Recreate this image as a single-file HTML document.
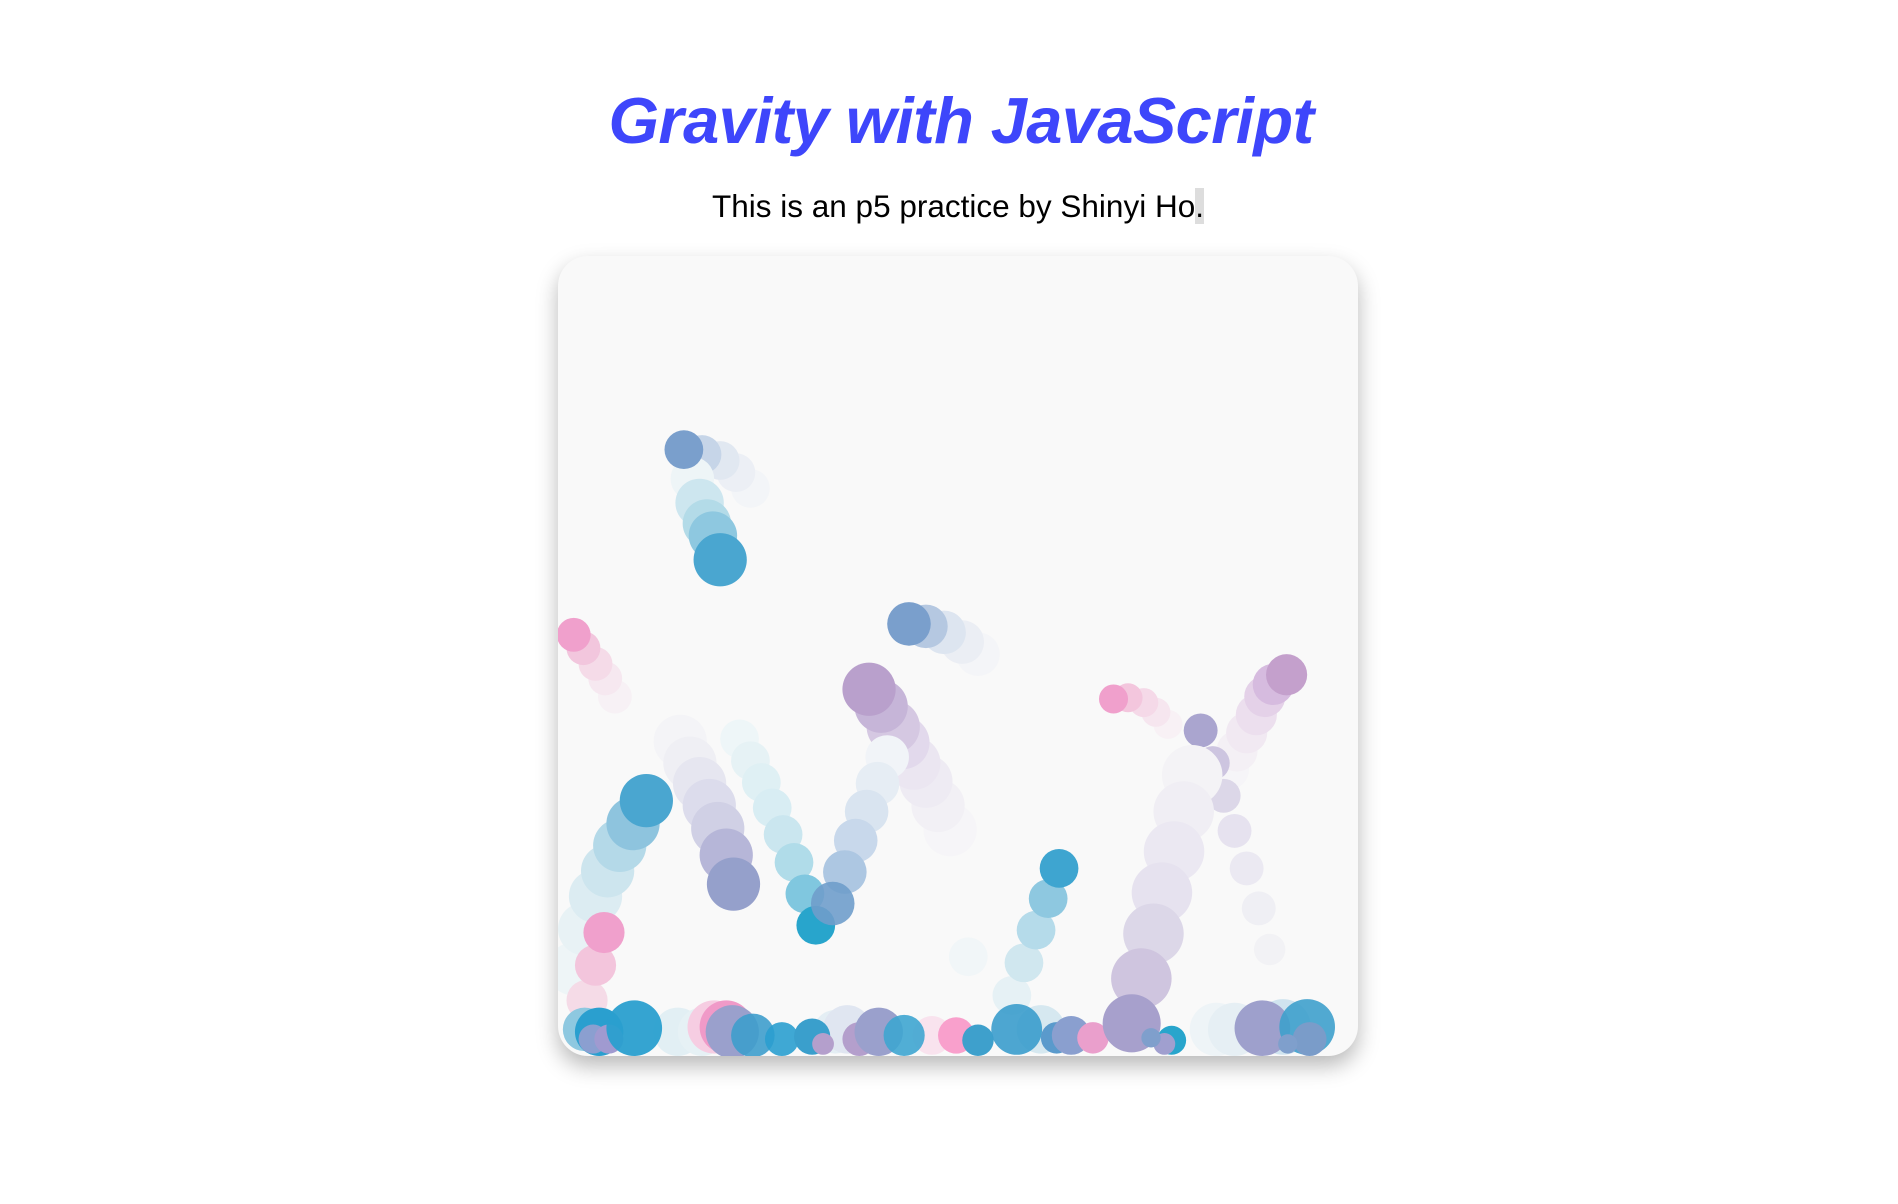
<!DOCTYPE html>
<html><head><meta charset="utf-8"><style>
html,body{margin:0;padding:0;background:#fff;width:1898px;height:1204px;overflow:hidden}
h1{position:absolute;left:0;width:1922px;top:83px;margin:0;text-align:center;font:italic bold 65px "Liberation Sans",sans-serif;color:#3e46fb;letter-spacing:-0.6px}
p{position:absolute;left:0;width:1916px;top:188px;margin:0;text-align:center;font:31.5px "Liberation Sans",sans-serif;color:#000}
p span{background:#ddd}
#card{position:absolute;left:558px;top:256px;width:800px;height:800px;border-radius:30px;overflow:hidden;background:#f9f9f9;box-shadow:0 10px 22px rgba(0,0,0,.28)}
</style></head><body>
<h1>Gravity with JavaScript</h1>
<p>This is an p5 practice by Shinyi Ho<span>.</span></p>
<div id="card">
<svg width="800" height="800" viewBox="461 211 661 661">
<g>
<circle cx="620" cy="403" r="16" fill="#f3f5f8"/><circle cx="608" cy="390" r="16" fill="#eceff5"/><circle cx="595" cy="380" r="16" fill="#e1e8f1"/><circle cx="580" cy="375" r="16" fill="#c6d5e8"/>
<circle cx="572" cy="395" r="18" fill="#eef5f7"/><circle cx="578" cy="415" r="20" fill="#cde6ef"/><circle cx="584" cy="432" r="20" fill="#b3dbe8"/><circle cx="589" cy="442" r="20" fill="#8ec8e0"/>
<circle cx="565" cy="371" r="16" fill="#7a9fcc"/>
<circle cx="595" cy="462" r="22" fill="#4aa6d0"/>
<circle cx="808" cy="540" r="18" fill="#f4f5f8"/><circle cx="795" cy="530" r="18" fill="#ebeef4"/><circle cx="780" cy="522" r="18" fill="#dde5f0"/><circle cx="765" cy="517" r="18" fill="#b5c8e1"/>
<circle cx="751" cy="515" r="18" fill="#7a9fcc"/>
<circle cx="508" cy="575" r="14" fill="#f7f1f5"/><circle cx="500" cy="560" r="14" fill="#f6e8f0"/><circle cx="492" cy="548" r="14" fill="#f5dbe8"/><circle cx="482" cy="535" r="14" fill="#f2c6dd"/>
<circle cx="474" cy="524" r="14" fill="#f0a0cc"/>
<circle cx="785" cy="685" r="22" fill="#f6f5f8"/><circle cx="775" cy="665" r="22" fill="#f2f0f5"/><circle cx="765" cy="645" r="22" fill="#eeebf3"/><circle cx="755" cy="630" r="22" fill="#ebe6f1"/><circle cx="746" cy="613" r="22" fill="#e2d9ec"/><circle cx="738" cy="600" r="22" fill="#d5c8e2"/><circle cx="728" cy="583" r="22" fill="#c6b5d8"/>
<circle cx="718" cy="569" r="22" fill="#b9a0cc"/>
<circle cx="965" cy="598" r="12" fill="#f8f1f5"/><circle cx="955" cy="588" r="12" fill="#f6e6ef"/><circle cx="945" cy="580" r="12" fill="#f5d9e8"/><circle cx="932" cy="576" r="12" fill="#f3c6dd"/>
<circle cx="920" cy="577" r="12" fill="#f0a0cc"/>
<circle cx="1015" cy="635" r="17" fill="#f6f5f8"/><circle cx="1022" cy="620" r="17" fill="#f4f0f5"/><circle cx="1030" cy="605" r="17" fill="#f1e9f2"/><circle cx="1038" cy="590" r="17" fill="#ecdfee"/><circle cx="1045" cy="575" r="17" fill="#e4d1e8"/><circle cx="1052" cy="565" r="17" fill="#d6bbdf"/>
<circle cx="1063" cy="557" r="17" fill="#c4a0cc"/>
<circle cx="1049" cy="784" r="13" fill="#f2f2f5"/><circle cx="1040" cy="750" r="14" fill="#efeff4"/><circle cx="1030" cy="717" r="14" fill="#ebe9f2"/><circle cx="1020" cy="686" r="14" fill="#e6e2ef"/><circle cx="1011" cy="657" r="14" fill="#dcd7e8"/><circle cx="1002" cy="630" r="14" fill="#cdc5e0"/>
<circle cx="992" cy="603" r="14" fill="#aaa5cf"/>
<circle cx="985" cy="640" r="25" fill="#f4f3f6"/><circle cx="978" cy="670" r="25" fill="#f0eef4"/><circle cx="970" cy="703" r="25" fill="#ebe8f2"/><circle cx="960" cy="737" r="25" fill="#e6e2ef"/><circle cx="953" cy="771" r="25" fill="#dcd7e8"/><circle cx="943" cy="808" r="25" fill="#cfc5df"/>
<circle cx="800" cy="790" r="16" fill="#f1f6f8"/><circle cx="836" cy="822" r="16" fill="#e6f1f5"/><circle cx="846" cy="795" r="16" fill="#d0e7ef"/><circle cx="856" cy="768" r="16" fill="#b5dbea"/><circle cx="866" cy="742" r="16" fill="#8ec8e0"/>
<circle cx="875" cy="717" r="16" fill="#3ea5d0"/>
<circle cx="474" cy="800" r="22" fill="#eef5f7"/><circle cx="483" cy="767" r="22" fill="#e8f2f5"/><circle cx="492" cy="740" r="22" fill="#dcecf2"/><circle cx="502" cy="719" r="22" fill="#cde5ee"/><circle cx="512" cy="698" r="22" fill="#b4d9e8"/><circle cx="523" cy="680" r="22" fill="#8ec4de"/>
<circle cx="534" cy="661" r="22" fill="#4aa6d0"/>
<circle cx="485" cy="826" r="17" fill="#f5dbe7"/><circle cx="492" cy="797" r="17" fill="#f3c5dc"/><circle cx="499" cy="770" r="17" fill="#f0a0cc"/>
<circle cx="562" cy="612" r="22" fill="#f4f4f7"/><circle cx="570" cy="630" r="22" fill="#efeff4"/><circle cx="578" cy="647" r="22" fill="#e6e6f0"/><circle cx="586" cy="665" r="22" fill="#dcdcec"/><circle cx="593" cy="684" r="22" fill="#d0d0e5"/><circle cx="600" cy="706" r="22" fill="#b6b6d8"/>
<circle cx="606" cy="730" r="22" fill="#95a0cb"/>
<circle cx="611" cy="610" r="16" fill="#eef6f8"/><circle cx="620" cy="628" r="16" fill="#e6f2f5"/><circle cx="629" cy="646" r="16" fill="#dff0f4"/><circle cx="638" cy="667" r="16" fill="#d8edf3"/><circle cx="647" cy="689" r="16" fill="#cae6ef"/><circle cx="656" cy="712" r="16" fill="#b0dce9"/><circle cx="665" cy="738" r="16" fill="#80c7df"/>
<circle cx="733" cy="625" r="18" fill="#f1f4f8"/><circle cx="725" cy="647" r="18" fill="#e6edf4"/><circle cx="716" cy="670" r="18" fill="#d9e4f0"/><circle cx="707" cy="694" r="18" fill="#c8d8eb"/><circle cx="698" cy="720" r="18" fill="#adc7e2"/>
<circle cx="674" cy="764" r="16" fill="#28a5cc"/>
<circle cx="688" cy="746" r="18" fill="#6f9dcb" opacity=".9"/>
<circle cx="560" cy="852" r="20" fill="#e2eff4"/><circle cx="580" cy="852" r="20" fill="#e6f1f5"/><circle cx="690" cy="852" r="18" fill="#e4eef4"/><circle cx="700" cy="850" r="20" fill="#e0e6f1"/><circle cx="770" cy="855" r="16" fill="#f9e3ee"/><circle cx="860" cy="850" r="20" fill="#d6e8f0"/><circle cx="1005" cy="850" r="22" fill="#eef4f7"/><circle cx="1020" cy="850" r="22" fill="#e6eff4"/><circle cx="1060" cy="848" r="23" fill="#d0e4ef"/><circle cx="590" cy="848" r="22" fill="#f6cde2"/>
<circle cx="483" cy="850" r="18" fill="#8ec8e0"/><circle cx="495" cy="852" r="20" fill="#2a9fcf"/><circle cx="490" cy="858" r="12" fill="#8b9fd0"/><circle cx="503" cy="858" r="12" fill="#a09ad0"/>
<circle cx="524" cy="849" r="23" fill="#2a9fcf" opacity=".95"/>
<circle cx="600" cy="848" r="22" fill="#f09ac8"/><circle cx="605" cy="852" r="22" fill="#9aa0cc"/><circle cx="622" cy="855" r="18" fill="#3e9dcc" opacity=".9"/><circle cx="646" cy="858" r="14" fill="#2a9fcf" opacity=".9"/><circle cx="671" cy="856" r="15" fill="#3a9fcc"/><circle cx="680" cy="862" r="9" fill="#b49fcc"/>
<circle cx="710" cy="858" r="14" fill="#b49fcc"/><circle cx="726" cy="852" r="20" fill="#9aa0cc"/><circle cx="747" cy="855" r="17" fill="#3ea5d0" opacity=".9"/>
<circle cx="790" cy="855" r="15" fill="#f9a0cc"/><circle cx="808" cy="859" r="13" fill="#3ea0cc"/><circle cx="840" cy="850" r="21" fill="#3a9ccc" opacity=".9"/><circle cx="873" cy="857" r="13" fill="#5a9acc"/><circle cx="885" cy="855" r="16" fill="#8a9fcf"/><circle cx="903" cy="857" r="13" fill="#ea9fcc"/>
<circle cx="935" cy="845" r="24" fill="#a7a0cc"/><circle cx="968" cy="859" r="12" fill="#28a5cc"/><circle cx="962" cy="862" r="9" fill="#a09fcf"/><circle cx="951" cy="857" r="8" fill="#7f9fcc"/>
<circle cx="1043" cy="849" r="23" fill="#9ea0cc"/><circle cx="1080" cy="848" r="23" fill="#3ea0cc" opacity=".9"/><circle cx="1082" cy="858" r="14" fill="#7a9cc9"/><circle cx="1064" cy="862" r="8" fill="#7f9fcc"/>
</g>
</svg>
</div>
</body></html>
